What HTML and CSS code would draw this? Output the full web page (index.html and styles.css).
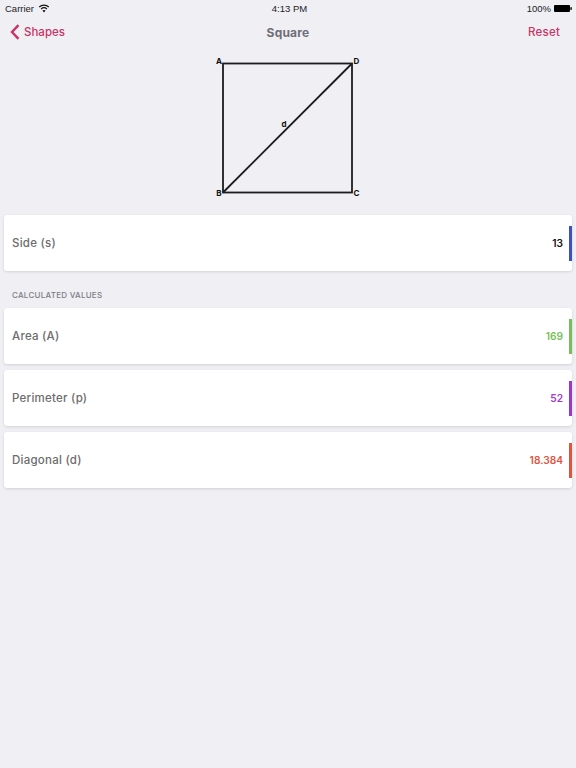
FILE: index.html
```html
<!DOCTYPE html>
<html lang="en">
<head>
<meta charset="utf-8">
<title>Square</title>
<link rel="stylesheet" href="styles.css">
</head>
<body>
<div class="status">
  <div class="status-left">
    <span>Carrier</span>
    <svg class="wifi" width="12" height="9" viewBox="0 0 12 9"><path d="M6 8.6 7.6 6.6A2.6 2.6 0 0 0 4.4 6.6Z" fill="#111"/><path d="M3.1 5A4.4 4.4 0 0 1 8.9 5M1.2 3A7.2 7.2 0 0 1 10.800 3" fill="none" stroke="#111" stroke-width="1.2"/></svg>
  </div>
  <div class="status-time">4:13 PM</div>
  <div class="status-right">
    <span>100%</span>
    <svg class="battery" width="18" height="7" viewBox="0 0 18 7"><rect width="16" height="7" rx="1" fill="#000"/><rect x="16.4" y="2.2" width="1.4" height="2.6" fill="#000"/></svg>
  </div>
</div>
<header class="nav">
  <div class="nav-back">
    <svg width="10" height="16" viewBox="0 0 10 16"><path d="M8.5 1.2 2 8l6.500 6.800" fill="none" stroke="#cb3265" stroke-width="2.400"/></svg>
    <span>Shapes</span>
  </div>
  <div class="nav-title">Square</div>
  <div class="nav-reset">Reset</div>
</header>
<div class="diagram">
  <svg width="160" height="156" viewBox="0 0 160 156">
    <g fill="none" stroke="#1c1c1c" stroke-width="1.800">
      <rect x="15" y="7.500" width="129" height="129"/>
      <path d="M15 136.500 144 7.500"/>
    </g>
    <g class="pt">
      <text x="11" y="7.500" text-anchor="middle">A</text>
      <text x="148.500" y="7.500" text-anchor="middle">D</text>
      <text x="11" y="140" text-anchor="middle">B</text>
      <text x="148.500" y="140" text-anchor="middle">C</text>
      <text x="76" y="71" text-anchor="middle">d</text>
    </g>
  </svg>
</div>
<main class="content">
  <section class="card">
    <span class="label">Side (s)</span>
    <span class="value v-black">13</span>
    <i class="bar b-blue"></i>
  </section>
  <h2 class="section">CALCULATED VALUES</h2>
  <div class="list">
    <section class="card">
      <span class="label">Area (A)</span>
      <span class="value v-green">169</span>
      <i class="bar b-green"></i>
    </section>
    <section class="card">
      <span class="label">Perimeter (p)</span>
      <span class="value v-purple">52</span>
      <i class="bar b-purple"></i>
    </section>
    <section class="card">
      <span class="label">Diagonal (d)</span>
      <span class="value v-red">18.384</span>
      <i class="bar b-red"></i>
    </section>
  </div>
</main>
</body>
</html>
```
FILE: styles.css
```css
* { box-sizing: border-box; }
html, body { margin: 0; height: 100%; }
body {
  background: #efeff4;
  font-family: "Inter", "Liberation Sans", sans-serif;
  color: #666;
  overflow: hidden;
}
.status {
  height: 16px;
  display: grid;
  grid-template-columns: 1fr auto 1fr;
  align-items: center;
  padding: 0 4px 0 5px;
  font-family: "Liberation Sans", sans-serif;
  font-size: 9.500px;
  color: #222;
}
.status-left { display: flex; align-items: center; gap: 4px; }
.status-right { display: flex; align-items: center; justify-content: flex-end; gap: 3px; }
.status-time { font-size: 9.500px; margin-left: 2px; }
.nav {
  height: 32px;
  display: grid;
  grid-template-columns: 1fr auto 1fr;
  align-items: center;
  padding: 0 16px;
  font-size: 11.500px;
  font-weight: 500;
  color: #cb3265;
}
.nav-back { display: flex; align-items: center; gap: 4px; margin-left: -6px; }
.nav-title { font-size: 12px; font-weight: 700; color: #6e6e78; letter-spacing: .2px; }
.nav-reset { text-align: right; letter-spacing: .2px; }
.diagram {
  height: 167px;
  padding-top: 8px;
  display: flex;
  justify-content: center;
}
.diagram svg { display: block; margin-left: -1px; }
.pt text {
  font-family: "Inter", "Liberation Sans", sans-serif;
  font-size: 8px;
  font-weight: 700;
  fill: #111;
}
.content { padding: 0 4px; }
.card {
  height: 56px;
  display: flex;
  align-items: center;
  justify-content: space-between;
  background: #fff;
  border-radius: 3px;
  box-shadow: 0 1px 3px rgba(0, 0, 0, .12);
  padding: 0 9px 0 8px;
  position: relative;
}
.label { font-size: 11.500px; font-weight: 500; color: #6c6c6c; letter-spacing: .25px; }
.value { font-size: 10.200px; font-weight: 600; }
.bar {
  position: absolute;
  right: 0;
  top: 11px;
  width: 3px;
  height: 35px;
}
.section {
  margin: 0;
  height: 37px;
  padding: 19px 0 0 8px;
  font-size: 8px;
  font-weight: 500;
  letter-spacing: .25px;
  color: #7d7d85;
}
.list { display: flex; flex-direction: column; gap: 6px; }
.v-black { color: #111; }
.v-green { color: #7ac05c; }
.v-purple { color: #a23bd0; }
.v-red { color: #e2533f; }
.b-blue { background: #3d4fc4; }
.b-green { background: #79bd5a; }
.b-purple { background: #9c36c9; }
.b-red { background: #e0533f; }
```
